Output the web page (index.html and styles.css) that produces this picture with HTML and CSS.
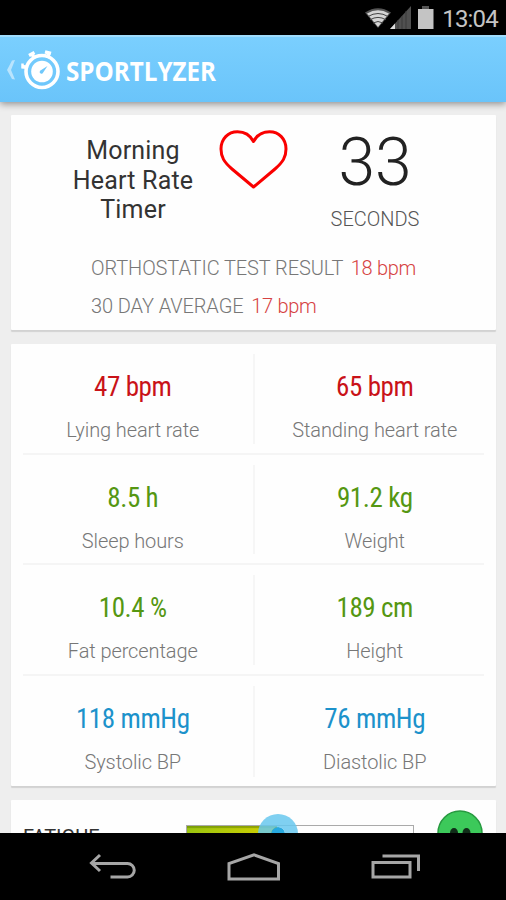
FILE: index.html
```html
<!DOCTYPE html>
<html lang="en">

<head>
    <meta charset="UTF-8">
    <meta name="viewport" content="width=device-width, initial-scale=1.0">
    <title>Sportlyzer - Morning Heart Rate Timer</title>
    <link rel="stylesheet" href="styles.css">
</head>

<body>
    <div class="status-bar">
        <svg class="wifi" width="26" height="20" viewBox="0 0 26 20">
            <path d="M0 4.5Q13 -4 26 4.5L13 20Z" fill="#555" />
            <path d="M2 5.5Q13 -1 24 5.5L13 19Z" fill="#d5d5d5" />
            <path d="M3 8.5Q13 2.5 23 8.5M5 11.8Q13 7 21 11.8M8 15Q13 12 18 15" fill="none" stroke="#444" stroke-width="1" />
        </svg>
        <svg class="signal" width="21" height="23" viewBox="0 0 21 23">
            <path d="M0 23L21 0V23Z" fill="#505050" />
            <path d="M0 23L5 17.5V23Z" fill="#ddd" />
            <path d="M8 14V23M12 10V23M16 5V23" stroke="#3a3a3a" stroke-width="1" />
        </svg>
        <svg class="battery" width="16" height="23" viewBox="0 0 16 23">
            <path d="M4 0H11V3H4Z" fill="#555" />
            <path d="M0 3H15.500V23H0Z" fill="#c4c4c4" />
        </svg>
        <span class="clock">13:04</span>
    </div>

    <header class="app-bar">
        <svg class="up" width="10" height="22" viewBox="0 0 10 22">
            <path d="M9 1L6 1.500L1 11L6 20L9 20.500L5 11Z" fill="#b9e4fd" />
        </svg>
        <svg class="logo" width="40" height="40" viewBox="0 0 40 40">
            <g fill="none" stroke="#fff">
                <circle cx="21" cy="21.500" r="16" stroke-width="3.600" />
                <path d="M13.500 8.500L11 4M8 5.500L13.500 2.500M26.500 8L28 3M24 1.800L30 3.500M6 17.500L1.500 16.500" stroke-width="3.400" />
                <path d="M1.500 13.500V18.500" stroke-width="2.500" />
            </g>
            <circle cx="21" cy="21.500" r="10.800" fill="#fff" />
            <path d="M26.500 16L22.200 22.500A1.800 1.800 0 1 1 19.800 20.300Z" fill="#70c8fb" />
        </svg>
        <h1>SPORTLYZER</h1>
    </header>

    <main class="content">
        <section class="card timer-card">
            <div class="timer">
                <h2>Morning<br>Heart Rate<br>Timer</h2>
                <svg class="heart" width="70" height="62" viewBox="0 0 70 62">
                    <path d="M35.500 57L14 39C6 32 3 27 3 19C3 9 10 1.800 19.500 1.800C27 1.800 32 5 35.500 11.500C39 5 44 1.800 51.500 1.800C61 1.800 68 9 68 19C68 27 65 32 57 39Z" fill="none" stroke="#fa0000" stroke-width="3" stroke-linejoin="round" />
                </svg>
                <div class="countdown">
                    <span class="seconds">33</span>
                    <span class="unit">SECONDS</span>
                </div>
            </div>
            <div class="results">
                <p>ORTHOSTATIC TEST RESULT <span>18 bpm</span></p>
                <p>30 DAY AVERAGE <span>17 bpm</span></p>
            </div>
        </section>

        <section class="card stats">
            <div class="row red">
                <div class="stat"><strong>47 bpm</strong><span>Lying heart rate</span></div>
                <div class="stat"><strong>65 bpm</strong><span>Standing heart rate</span></div>
            </div>
            <div class="row green">
                <div class="stat"><strong>8.5 h</strong><span>Sleep hours</span></div>
                <div class="stat"><strong>91.2 kg</strong><span>Weight</span></div>
            </div>
            <div class="row green">
                <div class="stat"><strong>10.4 %</strong><span>Fat percentage</span></div>
                <div class="stat"><strong>189 cm</strong><span>Height</span></div>
            </div>
            <div class="row blue">
                <div class="stat"><strong>118 mmHg</strong><span>Systolic BP</span></div>
                <div class="stat"><strong>76 mmHg</strong><span>Diastolic BP</span></div>
            </div>
        </section>

        <section class="card fatigue">
            <span class="fatigue-label">FATIGUE</span>
            <div class="slider">
                <div class="fill"></div>
                <div class="thumb"></div>
            </div>
            <svg class="face" width="46" height="46" viewBox="0 0 46 46">
                <circle cx="23" cy="23" r="22" fill="#3cc95a" stroke="#279a40" stroke-width="1.500" />
                <ellipse cx="17" cy="23" rx="4" ry="5" fill="#102d18" />
                <ellipse cx="29.500" cy="23" rx="4" ry="5" fill="#102d18" />
                <path d="M12 32Q23 41 34 32" fill="none" stroke="#102d18" stroke-width="2" />
            </svg>
        </section>
    </main>

    <nav class="nav-bar">
        <svg width="48" height="28" viewBox="0 0 48 28">
            <path d="M11 2L2.500 10L11 18M3 10.500H38.500A6.700 6.700 0 0 1 38.500 24H21.500" />
        </svg>
        <svg width="54" height="30" viewBox="0 0 54 30">
            <path d="M2 26V10.500L27 1.800L51.500 10.500V26Z" />
        </svg>
        <svg width="50" height="28" viewBox="0 0 50 28">
            <path d="M2 9.500H39V24H2ZM11.500 3H47.500V18" />
        </svg>
    </nav>
</body>

</html>
```
FILE: styles.css
```css
body {
    font-family: Roboto, sans-serif;
    font-weight: 300;
    background-color: #eee;
    margin: 0;
    height: 900px;
    display: flex;
    flex-direction: column;
    overflow: hidden;
}

h1,
h2,
p {
    margin: 0;
}

svg {
    display: block;
    flex: none;
}

.status-bar {
    height: 35px;
    flex: none;
    box-sizing: border-box;
    padding: 0 8px 0 0;
    background-color: #000;
    display: flex;
    justify-content: flex-end;
    align-items: flex-start;
}

.wifi {
    margin-top: 8px;
}

.signal {
    margin: 6px 7px 0 -1px;
}

.battery {
    margin-top: 6px;
}

.clock {
    margin-left: 8px;
    color: #c4c4c4;
    font-size: 24px;
    font-weight: 400;
    line-height: 38px;
    letter-spacing: -0.8px;
}

.app-bar {
    height: 67px;
    flex: none;
    box-sizing: border-box;
    padding-left: 6px;
    border-top: 2px solid #a0dcfc;
    background: linear-gradient(#7acffe, #6ac4fa);
    box-shadow: 0 2px 7px rgba(0, 0, 0, 0.4);
    display: flex;
    align-items: center;
    position: relative;
}

.logo {
    margin: 0 5px 0 5px;
}

.app-bar h1 {
    color: #fff;
    font-family: "Open Sans", sans-serif;
    font-size: 27.5px;
    font-weight: 700;
    line-height: 34px;
    white-space: nowrap;
    transform: scaleX(0.88);
    transform-origin: left;
    margin-top: 2px;
}

.content {
    flex: 1;
    min-height: 0;
    overflow: hidden;
    padding: 13px 10px 0 11px;
}

.card {
    background-color: #fefefe;
    border-radius: 1px;
    box-shadow: 0 2px 1px #d2d2d2;
    box-sizing: border-box;
    margin-bottom: 14px;
}

.timer-card {
    height: 215px;
    padding-top: 15px;
}

.timer {
    display: grid;
    grid-template-columns: 180px 70px 1fr;
    height: 119px;
    padding-left: 32px;
}

.timer h2 {
    color: #333;
    font-size: 25px;
    font-weight: 400;
    line-height: 29.5px;
    letter-spacing: 0.2px;
    text-align: center;
    padding-top: 6px;
}

.heart {
    margin-left: -5px;
}

.countdown {
    display: flex;
    flex-direction: column;
    align-items: center;
    padding-right: 39px;
}

.seconds {
    color: #222;
    font-size: 66px;
    line-height: 66px;
}

.unit {
    color: #555;
    font-size: 20px;
    line-height: 24px;
    margin-top: 11px;
}

.results {
    padding-left: 80px;
    color: #777;
    font-size: 20px;
    line-height: 38px;
    letter-spacing: -0.1px;
}

.results span {
    color: #d64242;
    margin-left: 3px;
    letter-spacing: -0.3px;
}

.stats {
    height: 442px;
    padding: 0 12px;
}

.row {
    height: 110.600px;
    box-sizing: border-box;
    border-bottom: 2px solid #f5f5f5;
    padding: 10px 0 9px;
    display: grid;
    grid-template-columns: 1fr 1fr;
}

.row:last-child {
    border-bottom: none;
}

.stat {
    display: flex;
    flex-direction: column;
    align-items: center;
}

.stat:first-child {
    border-right: 2px solid #f6f6f6;
    padding-right: 10px;
    margin-right: -1px;
}

.stat:last-child {
    padding-left: 12px;
}

.stat strong {
    font-family: "Roboto Condensed", Roboto, sans-serif;
    font-stretch: condensed;
    font-size: 27px;
    font-weight: 400;
    line-height: 32px;
    letter-spacing: -0.4px;
    margin-top: 17px;
}

.stat span {
    color: #777;
    font-size: 20px;
    line-height: 24px;
    letter-spacing: -0.1px;
    margin-top: 15px;
}

.red strong {
    color: #c91218;
}

.green strong {
    color: #559712;
}

.blue strong {
    color: #1c92cb;
}

.fatigue {
    height: 90px;
    padding: 10px 12px 0;
    display: flex;
    align-items: flex-start;
    margin-bottom: 0;
}

.fatigue-label {
    width: 163px;
    color: #333;
    font-size: 20px;
    font-weight: 400;
    line-height: 24px;
    margin-top: 15px;
}

.slider {
    width: 226px;
    height: 20px;
    border: 1px solid #aaa;
    margin-top: 15px;
    position: relative;
}

.fill {
    width: 40%;
    height: 100%;
    background: linear-gradient(to right, #9bc510, #d3d000);
    box-shadow: inset 0 2px 1px rgba(90, 120, 0, 0.5);
}

.thumb {
    width: 14px;
    height: 14px;
    border: 13px solid rgba(105, 200, 238, 0.85);
    border-radius: 50%;
    background-color: #27a9df;
    background-clip: padding-box;
    position: absolute;
    left: 71px;
    top: -12px;
}

.face {
    margin-left: 23px;
}

.nav-bar {
    height: 67px;
    flex: none;
    box-sizing: border-box;
    padding: 20px 85px 0 89px;
    background-color: #000;
    display: flex;
    justify-content: space-between;
    position: relative;
}

.nav-bar path {
    fill: none;
    stroke: #a6a6a6;
    stroke-width: 3;
}
```
